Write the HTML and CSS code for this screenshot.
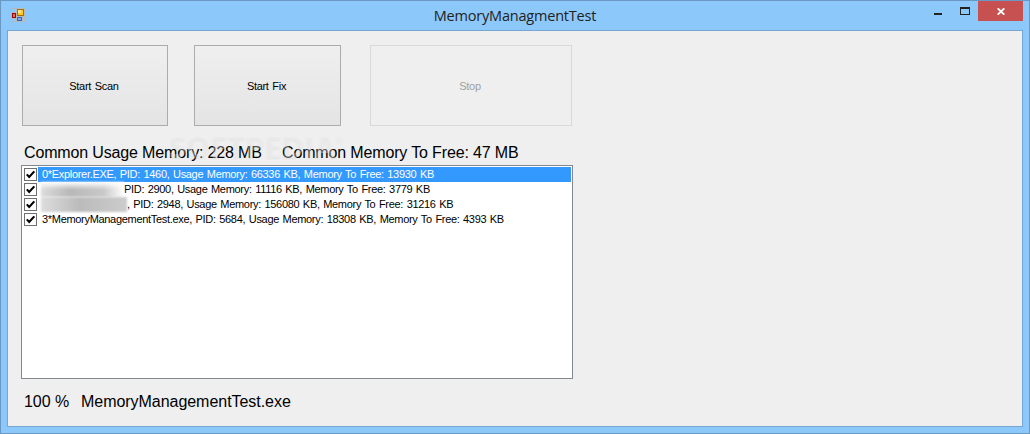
FILE: index.html
```html
<!DOCTYPE html>
<html lang="en">
<head>
    <meta charset="UTF-8">
    <title>MemoryManagmentTest</title>
    <link rel="stylesheet" href="styles.css">
</head>
<body>
    <div class="window">
        <header class="titlebar">
            <svg class="app-icon" width="14" height="14" viewBox="0 0 14 14" shape-rendering="crispEdges">
                <path d="M0.5 0.5h13v13h-13zM5.5 0v14M0 4.5h6M0 10.5h6M6 8.5h8M11.5 9v5" fill="none" stroke="#b5b9c1"/>
                <rect x="6" y="1" width="7" height="7" fill="#a87000"/>
                <rect x="7" y="2" width="5" height="5" fill="#ffc61c"/>
                <rect x="7" y="2" width="3" height="3" fill="#ffe583"/>
                <rect x="1" y="5" width="4" height="5" fill="#9d0800"/>
                <rect x="2" y="6" width="2" height="3" fill="#e4655a"/>
                <rect x="6" y="9" width="5" height="4" fill="#3262c4"/>
                <rect x="7" y="10" width="3" height="2" fill="#82aaf0"/>
            </svg>
            <h1><span class="title-text">MemoryManagmentTest</span></h1>
            <div class="window-controls">
                <svg class="minimize" width="8" height="2"><rect width="8" height="2" fill="#222"/></svg>
                <svg class="maximize" width="10" height="8" shape-rendering="crispEdges">
                    <path d="M0 0h10v8h-10zM1 2v5h8v-5z" fill="#222" fill-rule="evenodd"/>
                </svg>
                <div class="close">
                    <svg width="8" height="7" viewBox="0 0 8 7"><path d="M0.7 0.3L7.3 6.7M7.3 0.3L0.7 6.7" stroke="#fff" stroke-width="1.8"/></svg>
                </div>
            </div>
        </header>

        <main>
            <div class="buttons">
                <button class="btn-scan"><span>Start Scan</span></button>
                <button class="btn-fix"><span>Start Fix</span></button>
                <button class="btn-stop" disabled><span>Stop</span></button>
            </div>
            <div class="summary">
                <span class="usage">Common Usage Memory: 228 MB</span>
                <span class="to-free">Common Memory To Free: 47 MB</span>
                <div class="watermark">SOFTPEDIA<sup>®</sup></div>
            </div>
            <ul class="process-list">
                <li class="selected">
                    <svg class="check" width="13" height="13"><use href="#tick"/></svg>
                    <span class="label">0*Explorer.EXE, PID: 1460, Usage Memory: 66336 KB, Memory To Free: 13930 KB</span>
                </li>
                <li>
                    <svg class="check" width="13" height="13"><use href="#tick"/></svg>
                    <span class="redacted first"></span>
                    <span class="label">PID: 2900, Usage Memory: 11116 KB, Memory To Free: 3779 KB</span>
                </li>
                <li>
                    <svg class="check" width="13" height="13"><use href="#tick"/></svg>
                    <span class="redacted second"></span>
                    <span class="label">, PID: 2948, Usage Memory: 156080 KB, Memory To Free: 31216 KB</span>
                </li>
                <li>
                    <svg class="check" width="13" height="13"><use href="#tick"/></svg>
                    <span class="label">3*MemoryManagementTest.exe, PID: 5684, Usage Memory: 18308 KB, Memory To Free: 4393 KB</span>
                </li>
            </ul>
            <div class="status">
                <span class="percent">100 %</span>
                <span class="file">MemoryManagementTest.exe</span>
            </div>
        </main>
    </div>

    <svg width="0" height="0" class="defs">
        <symbol id="tick" viewBox="0 0 13 13">
            <rect x="0.5" y="0.5" width="12" height="12" fill="#fff" stroke="#707070"/>
            <path d="M2.8 6.4L5.2 9L10.3 3.4" fill="none" stroke="#000" stroke-width="2.1"/>
        </symbol>
    </svg>
</body>
</html>
```

FILE: styles.css
```css
* {
    box-sizing: border-box;
}
body {
    margin: 0;
    overflow: hidden;
    font-family: "Liberation Sans", Arial, sans-serif;
    color: #000;
}
.defs {
    display: block;
}
.window {
    width: 1030px;
    height: 434px;
    border: 1px solid #6b97c5;
    background: #8dc8fb;
    padding: 0 6px 6px;
    display: flex;
    flex-direction: column;
}
.titlebar {
    height: 29px;
    display: grid;
    grid-template-columns: 120px 1fr 120px;
}
.app-icon {
    margin: 7px 0 0 4px;
}
h1 {
    margin: 0;
    font: 14.5px/29px "Open Sans", sans-serif;
    color: #222;
    text-align: center;
}
.title-text {
    letter-spacing: -0.2px;
}
.window-controls {
    display: flex;
    justify-content: flex-end;
}
.minimize {
    margin: 12px 18px 0 0;
}
.maximize {
    margin: 6px 8px 0 0;
}
.close {
    width: 45px;
    height: 20px;
    background: #c75050;
    display: flex;
    justify-content: center;
    align-items: center;
}
main {
    flex: 1;
    border: 1px solid #76a6d3;
    background: #efefef;
    padding: 14px 13px 0;
}
.buttons {
    display: flex;
    padding-left: 1px;
}
button {
    height: 81px;
    padding: 1px 2px 0 0;
    border: 1px solid #acacac;
    background: linear-gradient(#efefef, #e4e4e4);
    font: 11px "Liberation Sans", Arial, sans-serif;
    letter-spacing: -0.3px;
    word-spacing: 1px;
    color: #000;
}
button:disabled {
    border-color: #d9d9d9;
    background: #efefef;
    color: #a0a0a0;
}
.btn-scan {
    width: 146px;
    margin-right: 26px;
}
.btn-fix {
    width: 147px;
    margin-right: 29px;
}
.btn-stop {
    width: 202px;
}
.summary {
    position: relative;
    height: 39px;
    padding: 17px 0 0 3px;
    display: flex;
    font-size: 16px;
    line-height: 20px;
    letter-spacing: -0.15px;
    white-space: nowrap;
}
.usage {
    width: 258px;
}
.watermark {
    position: absolute;
    left: 148px;
    top: 3px;
    font: bold 31px/34px "Open Sans", sans-serif;
    letter-spacing: -0.2px;
    color: rgba(247, 247, 247, 0.35);
    text-shadow: 0 1px 2px rgba(0, 0, 0, 0.05);
}
.watermark sup {
    font-size: 9px;
    line-height: 9px;
    vertical-align: 15px;
}
.process-list {
    width: 552px;
    height: 214px;
    margin: 0;
    padding: 1px 1px 0;
    border: 1px solid #828790;
    background: #fff;
    list-style: none;
    font-size: 11px;
    line-height: 15px;
    letter-spacing: -0.31px;
    word-spacing: 0.8px;
    white-space: nowrap;
}
.process-list li {
    height: 15px;
    display: flex;
}
.check {
    margin: 1px 1px 0;
    flex: none;
}
.label {
    padding-left: 4px;
}
.selected .label {
    flex: 1;
    background: #3399ff;
    color: #fff;
}
.redacted {
    flex: none;
    height: 15px;
    margin-left: 3px;
    filter: blur(1px);
}
.redacted.first {
    width: 83px;
    background: linear-gradient(#fff, rgba(255, 255, 255, 0) 50%), linear-gradient(90deg, #ddd, #b8b8b8 35%, #c8c8c8 75%, #fff);
}
.redacted.second {
    width: 86px;
    background: linear-gradient(90deg, #ddd, #bbb 45%, #ccc);
}
.redacted + .label {
    padding-left: 0;
}
.status {
    display: flex;
    padding: 13px 0 0 3px;
    font-size: 16px;
    line-height: 20px;
    letter-spacing: -0.04px;
}
.percent {
    width: 57px;
}
```
